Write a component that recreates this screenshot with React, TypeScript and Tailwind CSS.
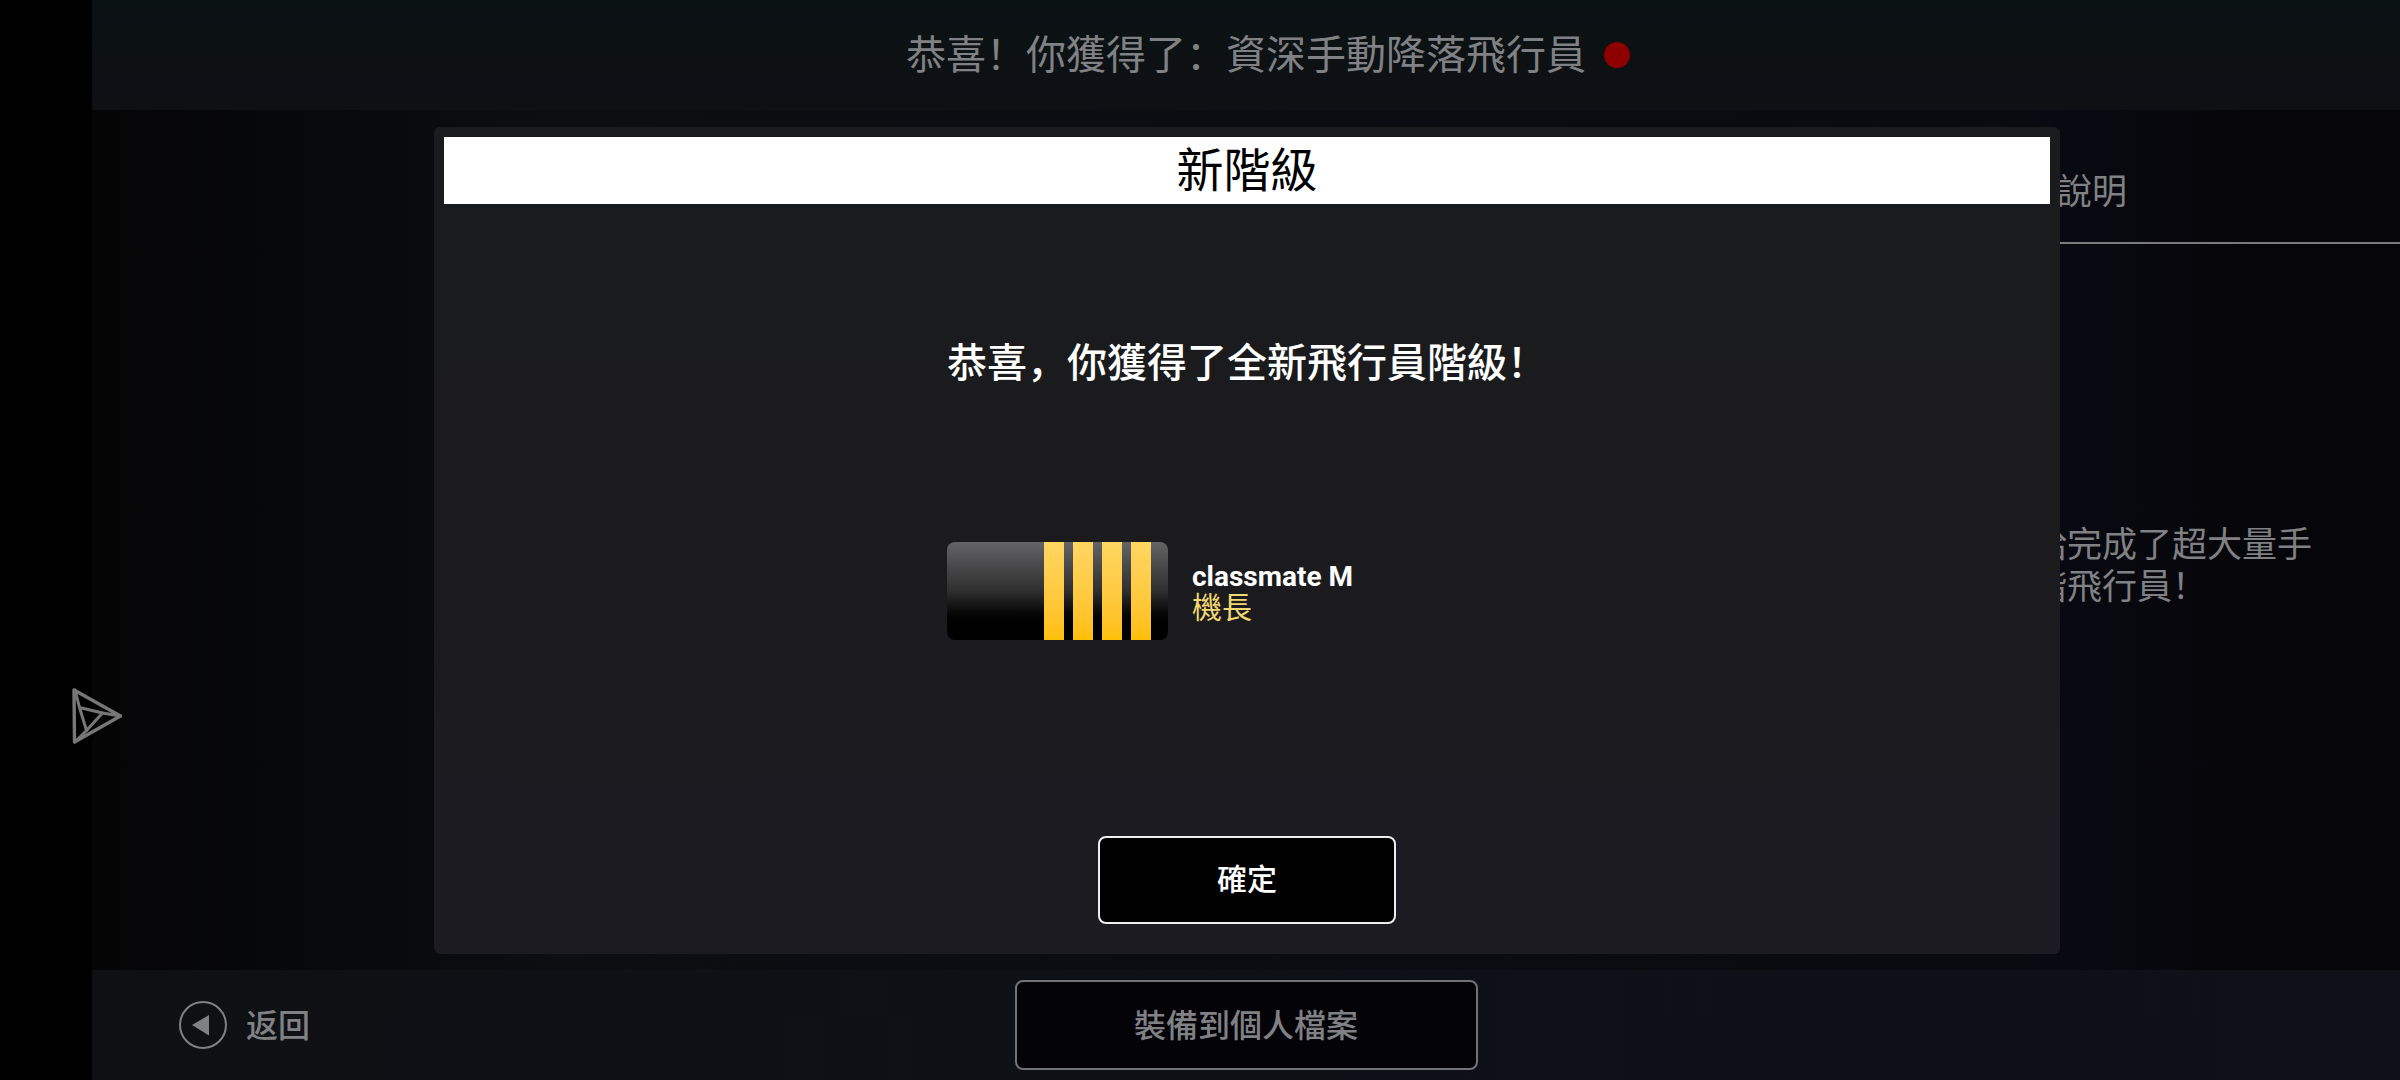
const STRIPES = ["first", "second", "third", "fourth"];

function FloatingArrow() {
  return (
    <svg className="absolute left-[72px] top-[687px] z-20 h-[58px] w-[54px]" viewBox="72 687 54 58" fill="none"
      stroke="#777777" strokeWidth="3.4" strokeLinejoin="round" strokeLinecap="round" aria-hidden="true">
      <path d="M74 690 L120.500 716 L74.500 742 Z" />
      <path d="M75 690 L79.500 707.500 L86.500 730.500 L102.500 713 L79.500 707.500" strokeWidth="3" />
      <path d="M102.500 713 L120.500 716 M86.500 730.500 L75 742" strokeWidth="3" />
    </svg>
  );
}

function RankBadge() {
  return (
    <div className="flex h-[98px] w-[221px] justify-end gap-[9px] overflow-hidden rounded-lg bg-linear-to-b from-[#646466] via-[#2f2f30] to-black to-90% pr-[17px]">
      {STRIPES.map((s) => (
        <div key={s} className="w-[20px] bg-linear-to-b from-[#ffd660] to-[#ffbf05]" />
      ))}
    </div>
  );
}

function RankDialog() {
  return (
    <div className="absolute inset-0 z-10 flex items-center justify-center pl-0.5">
      <div role="dialog" aria-labelledby="rank-title"
        className="flex w-[70.5%] flex-col items-center rounded-md bg-linear-to-b from-[#1a1b1d] via-[#1b1b1e] to-[#1c1b22] p-[10px] pb-[30px]">
        <h2 id="rank-title" className="h-[67px] w-full bg-white text-center text-[47px] leading-[60px] font-normal text-black">
          新階級
        </h2>
        <div className="mt-32">
          <p className="text-[40px] leading-[56px] font-medium text-white">恭喜，你獲得了全新飛行員階級！</p>
          <div className="mt-[154px] flex items-center gap-6">
            <RankBadge />
            <div>
              <div className="font-[Roboto] text-[28px] leading-[28px] font-bold text-white">classmate M</div>
              <div className="text-[30px] leading-[28px] text-[#f2d873]">機長</div>
            </div>
          </div>
        </div>
        <button type="button"
          className="mt-[196px] h-[88px] w-[298px] rounded-lg border-2 border-[#eeeeee] bg-black pb-1 text-[30px] font-medium text-white">
          確定
        </button>
      </div>
    </div>
  );
}

export default function App() {
  return (
    <div lang="zh-Hans" className="relative flex min-h-screen bg-black font-['Noto_Sans_CJK_SC',sans-serif] text-[#808184]">
      <div className="w-[92px] shrink-0" />
      <FloatingArrow />

      <div className="relative flex flex-1 flex-col bg-linear-to-r from-[#050506] via-[#0c0e12] via-20% to-[#090a10]">
        <header className="flex h-[110px] items-center justify-center bg-linear-to-b from-[#0b1214] to-[#0e1014]">
          <h1 className="relative pb-1.5 text-[40px] leading-[56px]">
            恭喜！你獲得了：資深手動降落飛行員
            <span className="absolute top-1/2 left-full ml-[18px] size-[26px] -translate-y-1/2 rounded-full bg-[#8e0000]" />
          </h1>
        </header>

        <main className="flex flex-1 justify-end">
          <section className="w-[368px] bg-linear-to-r from-[#090a12] to-[#06060a] to-60%">
            <h2 className="border-b-2 border-[#7b7b7e] px-[25px] pt-[58px] pb-[32px] text-[35px] leading-[42px]">說明</h2>
            <p className="mt-[277px] text-[35px] leading-[42px]">
              給完成了超大量手
              <br />
              階飛行員！
            </p>
          </section>
        </main>

        <footer className="grid h-[110px] grid-cols-[1fr_auto_1fr] items-center bg-linear-to-r from-[#0f1014] via-[#0d1116] to-[#101018]">
          <button type="button" className="ml-[86px] flex w-fit items-center gap-[18px] text-[32px] leading-[44px] font-medium">
            <svg className="size-[50px]" viewBox="0 0 50 50" aria-hidden="true">
              <circle cx="25" cy="25" r="23" fill="none" stroke="currentColor" strokeWidth="2" />
              <path d="M14 25 L31 15 V35.500 Z" fill="currentColor" />
            </svg>
            <span className="pb-1">返回</span>
          </button>
          <button type="button" className="h-[90px] w-[463px] rounded-lg border-2 border-[#737377] bg-[#040308] pb-1 text-[32px] font-medium">
            裝備到個人檔案
          </button>
        </footer>

        <RankDialog />
      </div>
    </div>
  );
}
